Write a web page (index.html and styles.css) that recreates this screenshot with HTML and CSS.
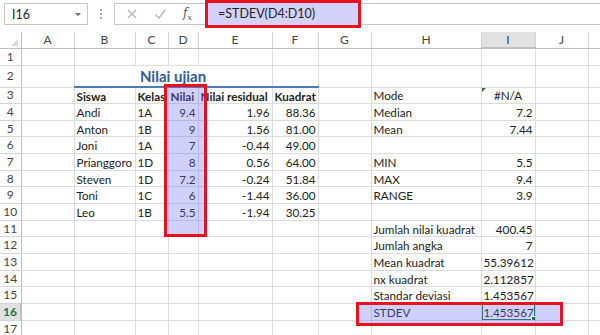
FILE: index.html
```html
<!DOCTYPE html>
<html lang="id">
<head>
  <meta charset="UTF-8" />
  <meta name="viewport" content="width=device-width, initial-scale=1.0" />
  <title>Nilai ujian - STDEV</title>
  <link rel="stylesheet" href="styles.css">
</head>
<body>
  <div class="toolbar">
    <div class="namebox"><span>I16</span><span class="caret"></span></div>
    <div class="grip"><i></i><i></i><i></i></div>
    <div class="fbar">
      <div class="fbtns">
        <svg class="ico" width="12" height="12" viewBox="0 0 12 12"><path d="M2 2 L10 10 M10 2 L2 10" stroke="#b5b5b5" stroke-width="1.3" fill="none"/></svg>
        <svg class="ico" width="13" height="12" viewBox="0 0 13 12"><path d="M1.5 6.5 L5 10 L11.5 1.5" stroke="#b5b5b5" stroke-width="1.3" fill="none"/></svg>
        <span class="fx">f<sub>x</sub></span>
      </div>
      <div class="formula">=STDEV(D4:D10)</div>
    </div>
  </div>

  <div class="sheet">
    <table class="grid">
      <colgroup>
        <col class="w-rh"><col class="w-a"><col class="w-b"><col class="w-c"><col class="w-d"><col class="w-e">
        <col class="w-f"><col class="w-g"><col class="w-h"><col class="w-i"><col class="w-j"><col class="w-k">
      </colgroup>
      <tr class="hd">
        <th class="corner"><span class="tri"></span></th><th>A</th><th>B</th><th>C</th><th>D</th><th>E</th>
        <th>F</th><th>G</th><th>H</th><th class="sel">I</th><th>J</th><th></th>
      </tr>
      <tr class="r1"><th>1</th><td></td><td></td><td></td><td></td><td></td><td></td><td></td><td></td><td></td><td></td><td></td></tr>
      <tr class="r2"><th>2</th><td></td><td colspan="4" class="title">Nilai ujian</td><td class="title-end"></td><td></td><td></td><td></td><td></td><td></td></tr>
      <tr><th>3</th><td></td><td class="b">Siswa</td><td class="b">Kelas</td><td class="b">Nilai</td><td class="b">Nilai residual</td><td class="b">Kuadrat</td><td></td><td>Mode</td><td class="err">#N/A</td><td></td><td></td></tr>
      <tr><th>4</th><td></td><td>Andi</td><td>1A</td><td class="n">9.4</td><td class="n">1.96</td><td class="n">88.36</td><td></td><td>Median</td><td class="n">7.2</td><td></td><td></td></tr>
      <tr><th>5</th><td></td><td>Anton</td><td>1B</td><td class="n">9</td><td class="n">1.56</td><td class="n">81.00</td><td></td><td>Mean</td><td class="n">7.44</td><td></td><td></td></tr>
      <tr><th>6</th><td></td><td>Joni</td><td>1A</td><td class="n">7</td><td class="n">-0.44</td><td class="n">49.00</td><td></td><td></td><td></td><td></td><td></td></tr>
      <tr><th>7</th><td></td><td>Prianggoro</td><td>1D</td><td class="n">8</td><td class="n">0.56</td><td class="n">64.00</td><td></td><td>MIN</td><td class="n">5.5</td><td></td><td></td></tr>
      <tr><th>8</th><td></td><td>Steven</td><td>1D</td><td class="n">7.2</td><td class="n">-0.24</td><td class="n">51.84</td><td></td><td>MAX</td><td class="n">9.4</td><td></td><td></td></tr>
      <tr><th>9</th><td></td><td>Toni</td><td>1C</td><td class="n">6</td><td class="n">-1.44</td><td class="n">36.00</td><td></td><td>RANGE</td><td class="n">3.9</td><td></td><td></td></tr>
      <tr><th>10</th><td></td><td>Leo</td><td>1B</td><td class="n">5.5</td><td class="n">-1.94</td><td class="n">30.25</td><td></td><td></td><td></td><td></td><td></td></tr>
      <tr><th>11</th><td></td><td></td><td></td><td></td><td></td><td></td><td></td><td>Jumlah nilai kuadrat</td><td class="n">400.45</td><td></td><td></td></tr>
      <tr><th>12</th><td></td><td></td><td></td><td></td><td></td><td></td><td></td><td>Jumlah angka</td><td class="n">7</td><td></td><td></td></tr>
      <tr><th>13</th><td></td><td></td><td></td><td></td><td></td><td></td><td></td><td>Mean kuadrat</td><td class="n">55.39612</td><td></td><td></td></tr>
      <tr><th>14</th><td></td><td></td><td></td><td></td><td></td><td></td><td></td><td>nx kuadrat</td><td class="n">2.112857</td><td></td><td></td></tr>
      <tr><th>15</th><td></td><td></td><td></td><td></td><td></td><td></td><td></td><td>Standar deviasi</td><td class="n">1.453567</td><td></td><td></td></tr>
      <tr><th class="sel-row">16</th><td></td><td></td><td></td><td></td><td></td><td></td><td></td><td>STDEV</td><td class="n active">1.453567</td><td></td><td></td></tr>
      <tr><th>17</th><td></td><td></td><td></td><td></td><td></td><td></td><td></td><td></td><td></td><td></td><td></td></tr>
    </table>

    <!-- red annotation boxes -->
    <div class="mark mark-col"></div>
    <div class="mark mark-row"></div>
  </div>
</body>
</html>
```

FILE: styles.css
```css
body {
  margin: 0;
  font-family: Lato, 'Liberation Sans', sans-serif;
  background: white;
  color: #222;
  overflow: hidden;
}

/* formula bar */
.toolbar {
  display: flex;
  align-items: flex-start;
  height: 32px;
}

.namebox {
  display: flex;
  align-items: center;
  justify-content: space-between;
  box-sizing: border-box;
  width: 84px;
  height: 22px;
  margin: 3px 0 0 4px;
  padding: 0 6px 0 7px;
  border: 1px solid #c6c6c6;
  font-size: 12.5px;
}

.caret {
  width: 0;
  height: 0;
  border-left: 3px solid transparent;
  border-right: 3px solid transparent;
  border-top: 3px solid #666;
}

.grip {
  display: flex;
  flex-direction: column;
  align-items: center;
  gap: 2px;
  width: 26px;
  padding-top: 9px;
}

.grip i {
  width: 2px;
  height: 2px;
  background: #aaa;
}

.fbar {
  flex: 1;
  display: flex;
  box-sizing: border-box;
  height: 22px;
  margin-top: 3px;
  border: 1px solid #c6c6c6;
  border-right: none;
}

.fbtns {
  display: flex;
  align-items: center;
  width: 90px;
  padding-left: 11px;
  box-sizing: border-box;
  gap: 16px;
}

.fx {
  font-family: 'DejaVu Serif', serif;
  font-style: italic;
  font-size: 12px;
  color: #555;
}

.fx sub {
  font-size: 8px;
}

.formula {
  box-sizing: border-box;
  width: 156px;
  height: 28px;
  margin: -4px 0 0 0;
  padding: 0 0 0 10px;
  border: 3px solid #e8111d;
  background: #d2d2fb;
  font-size: 12.5px;
  line-height: 22px;
}

/* sheet */
.sheet {
  position: relative;
}

.grid {
  border-collapse: collapse;
  table-layout: fixed;
  width: 600px;
  font-size: 11.7px;
}

.w-rh { width: 21px; }
.w-a { width: 53px; }
.w-b { width: 61px; }
.w-c { width: 33px; }
.w-d { width: 30px; }
.w-e { width: 74px; }
.w-f { width: 46px; }
.w-g { width: 53px; }
.w-h { width: 110px; }
.w-i { width: 54px; }
.w-j { width: 53px; }
.w-k { width: 12px; }

.grid tr {
  height: 16.67px;
}

.grid tr.hd { height: 16px; }
.grid tr.r1 { height: 17px; }
.grid tr.r2 { height: 22px; }

.grid td,
.grid th {
  padding: 0 2px;
  border: 1px solid #dcdcdc;
  white-space: nowrap;
  overflow: hidden;
  line-height: 14px;
  font-weight: normal;
}

.grid th {
  color: #444;
  text-align: center;
  border-color: #d4d4d4;
  font-size: 12px;
}

.grid tr.hd th {
  border-top: none;
  border-bottom-color: #bfbfbf;
}

.grid tr th:first-child {
  border-left: none;
  border-right-color: #bfbfbf;
  padding: 0;
}

.grid tr td:last-child,
.grid tr th:last-child {
  border-right: none;
}

.corner {
  position: relative;
}

.tri {
  position: absolute;
  right: 3px;
  bottom: 2px;
  width: 0;
  height: 0;
  border-left: 7px solid transparent;
  border-bottom: 7px solid #dadada;
}

.grid th.sel {
  background: #e1e1e1;
  border-bottom: 2px solid #217346;
}

.grid th.sel-row {
  background: #e1e1e1;
  color: #217346;
  font-weight: bold;
  border-right: 2px solid #217346;
}

.grid td.title {
  text-align: center;
  font-size: 15px;
  font-weight: bold;
  color: #2f5a98;
}

.grid td.title,
.grid td.title-end {
  border-bottom: 2px solid #4a7ebb;
}

.grid td.b { font-weight: bold; }

.grid td.n { text-align: right; }

.err {
  position: relative;
  text-align: center;
}

.err::before {
  content: "";
  position: absolute;
  left: 0;
  top: 0;
  border-top: 4px solid #1d7a3a;
  border-right: 4px solid transparent;
}

.active {
  position: relative;
}

.active::after {
  content: "";
  position: absolute;
  inset: -1px;
  border: 2px solid #217346;
}

.active::before {
  content: "";
  position: absolute;
  right: -3px;
  bottom: -3px;
  width: 5px;
  height: 5px;
  background: #217346;
  border: 1px solid white;
  z-index: 1;
}

/* red annotation boxes */
.mark {
  position: absolute;
  box-sizing: border-box;
  border: 3px solid #e8111d;
  background: rgba(110, 110, 245, 0.32);
}

.mark-col {
  left: 164px;
  top: 52px;
  width: 43px;
  height: 153px;
}

.mark-row {
  left: 356px;
  top: 270px;
  width: 207px;
  height: 24px;
}
```
